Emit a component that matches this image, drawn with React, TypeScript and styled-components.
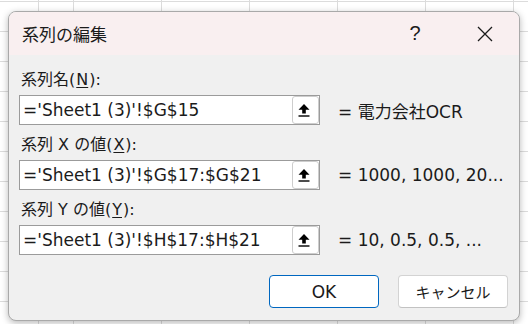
import React from "react";
import styled, { createGlobalStyle } from "styled-components";

const GlobalStyle = createGlobalStyle`
  html, body {
    margin: 0;
    padding: 0;
  }
  body {
    width: 528px;
    height: 324px;
    overflow: hidden;
    background-color: #ffffff;
    background-image:
      linear-gradient(to right, transparent 38px, #dcdcdc 38px, #dcdcdc 39px, transparent 39px),
      repeating-linear-gradient(to right, transparent 0, transparent 73px, #dcdcdc 73px, #dcdcdc 74px, transparent 74px, transparent 88px),
      repeating-linear-gradient(to bottom, transparent 0, transparent 1px, #dcdcdc 1px, #dcdcdc 2px, transparent 2px, transparent 30px);
  }
`;

const Page = styled.div`
  padding: 11px 8px 0;
`;

const Dialog = styled.div`
  width: 512px;
  height: 310px;
  box-sizing: border-box;
  display: flex;
  flex-direction: column;
  background: #f0f0f0;
  border: 1px solid #a9a9a9;
  border-radius: 8px;
  overflow: hidden;
  box-shadow: 0 2px 7px rgba(0, 0, 0, 0.28);
  color: #1b1b1b;
`;

const TitleBar = styled.header`
  height: 43px;
  flex: none;
  display: flex;
  align-items: center;
  padding-left: 13px;
  background: #f9eff0;
`;

const Title = styled.h1`
  flex: 1;
  margin: 0;
  font-family: "Noto Sans CJK JP", sans-serif;
  font-size: 17px;
  font-weight: 400;
  line-height: 22px;
`;

const TitleButton = styled.div<{ $last?: boolean }>`
  width: 46px;
  height: 43px;
  display: flex;
  align-items: center;
  justify-content: center;
  margin-right: ${({ $last }) => ($last ? "11px" : "24px")};
  font-family: "Liberation Sans", sans-serif;
  font-size: 20px;
  color: #1b1b1b;
`;

const Body = styled.main`
  flex: 1;
  display: flex;
  flex-direction: column;
  padding: 15px 11px 0 10px;
`;

const Field = styled.section`
  display: flex;
  flex-direction: column;
  gap: 5px;
  margin-bottom: 10px;
`;

const Label = styled.label`
  padding-left: 2px;
  font-family: "DejaVu Sans", "Noto Sans CJK JP", sans-serif;
  font-size: 16px;
  line-height: 20px;
  white-space: pre;
`;

const Key = styled.u`
  padding: 0 1px;
  text-decoration-thickness: 1px;
  text-underline-offset: 2px;
`;

const Row = styled.div`
  display: flex;
  align-items: center;
  gap: 18px;
`;

const RefBox = styled.div`
  width: 301px;
  height: 30px;
  box-sizing: border-box;
  display: flex;
  align-items: center;
  background: #ffffff;
  border: 1px solid #9b9b9b;
`;

const RefText = styled.span`
  flex: 1;
  padding-left: 3px;
  font-family: "DejaVu Sans", sans-serif;
  font-size: 17px;
  line-height: 28px;
  white-space: nowrap;
  overflow: hidden;
`;

const PickButton = styled.div`
  width: 27px;
  height: 28px;
  box-sizing: border-box;
  display: flex;
  align-items: center;
  justify-content: center;
  padding-right: 3px;
  background: #ffffff;
  border: 1px solid #cdcdcd;
  border-radius: 3px;
`;

const Value = styled.span`
  font-family: "DejaVu Sans", "Noto Sans CJK JP", sans-serif;
  font-size: 17px;
  white-space: nowrap;
`;

const Actions = styled.footer`
  display: flex;
  justify-content: flex-end;
  gap: 19px;
  margin-top: 10px;
`;

const Button = styled.button<{ $primary?: boolean }>`
  width: 110px;
  height: 33px;
  box-sizing: border-box;
  padding: 0;
  background: #ffffff;
  border: 1px solid ${({ $primary }) => ($primary ? "#0067c0" : "#d3d3d3")};
  border-bottom-color: ${({ $primary }) => ($primary ? "#0067c0" : "#c2c2c2")};
  border-radius: 4px;
  font-family: "DejaVu Sans", "Noto Sans CJK JP", sans-serif;
  font-size: ${({ $primary }) => ($primary ? "17px" : "15px")};
  color: #1b1b1b;
`;

function PickIcon() {
  return (
    <svg width="12" height="14" viewBox="0 0 12 14">
      <path d="M6 1 L11.5 6.8 H7.8 V10.6 H4.2 V6.8 H0.5 Z" fill="#000" />
      <rect x="0.5" y="12.3" width="11" height="1.4" fill="#000" />
    </svg>
  );
}

function CloseIcon() {
  return (
    <svg width="16" height="16" viewBox="0 0 16 16">
      <path d="M1 1 L15 15 M15 1 L1 15" stroke="#1b1b1b" strokeWidth="1.3" />
    </svg>
  );
}

const fields = [
  { label: ["系列名(", "N", "):"], ref: "='Sheet1 (3)'!$G$15", value: "= 電力会社OCR" },
  { label: ["系列 X の値(", "X", "):"], ref: "='Sheet1 (3)'!$G$17:$G$21", value: "= 1000, 1000, 20..." },
  { label: ["系列 Y の値(", "Y", "):"], ref: "='Sheet1 (3)'!$H$17:$H$21", value: "= 10, 0.5, 0.5, ..." },
];

export default function App() {
  return (
    <>
      <GlobalStyle />
      <Page>
        <Dialog>
          <TitleBar>
            <Title>系列の編集</Title>
            <TitleButton>?</TitleButton>
            <TitleButton $last>
              <CloseIcon />
            </TitleButton>
          </TitleBar>
          <Body>
            {fields.map((f) => (
              <Field key={f.ref}>
                <Label>
                  {f.label[0]}
                  <Key>{f.label[1]}</Key>
                  {f.label[2]}
                </Label>
                <Row>
                  <RefBox>
                    <RefText>{f.ref}</RefText>
                    <PickButton>
                      <PickIcon />
                    </PickButton>
                  </RefBox>
                  <Value>{f.value}</Value>
                </Row>
              </Field>
            ))}
            <Actions>
              <Button $primary>OK</Button>
              <Button>キャンセル</Button>
            </Actions>
          </Body>
        </Dialog>
      </Page>
    </>
  );
}
